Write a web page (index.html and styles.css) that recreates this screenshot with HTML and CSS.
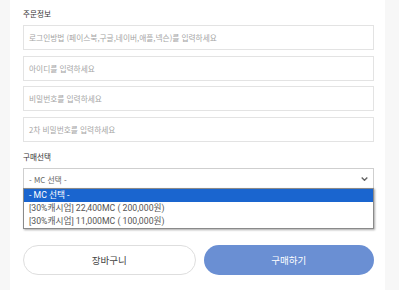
FILE: index.html
```html
<!DOCTYPE html>
<html lang="ko">
<head>
<meta charset="utf-8">
<link rel="stylesheet" href="styles.css">
</head>
<body>
<div class="panel">
  <div class="label label-top">주문정보</div>
  <div class="field">로그인방법 (페이스북,구글,네이버,애플,넥슨)를 입력하세요</div>
  <div class="field">아이디를 입력하세요</div>
  <div class="field">비밀번호를 입력하세요</div>
  <div class="field">2차 비밀번호를 입력하세요</div>
  <div class="label label-buy">구매선택</div>
  <div class="select-wrap">
    <div class="select">
      <span>- MC 선택 -</span>
      <svg class="chev" width="7" height="4" viewBox="0 0 7 4"><path d="M0.7 0.6 L3.5 3.3 L6.3 0.6" fill="none" stroke="#666" stroke-width="1.4"/></svg>
    </div>
    <div class="dropdown">
      <div class="opt opt-sel">- MC 선택 -</div>
      <div class="opt">[30%캐시업] 22,400MC ( 200,000원)</div>
      <div class="opt">[30%캐시업] 11,000MC ( 100,000원)</div>
    </div>
  </div>
  <div class="buttons">
    <div class="btn btn-cart">장바구니</div>
    <div class="btn btn-buy">구매하기</div>
  </div>
</div>
</body>
</html>
```
FILE: styles.css
```css
html, body {
  margin: 0;
  padding: 0;
  background: #f7f7f7;
  height: 290px;
  overflow: hidden;
}
body {
  font-family: "Noto Sans CJK KR", "Noto Sans", sans-serif;
}
.panel {
  margin-left: 10px;
  width: 375px;
  height: 290px;
  background: #fff;
  box-sizing: border-box;
  padding: 8px 11px 0 13px;
  display: flex;
  flex-direction: column;
}
.label {
  font-size: 7.6px;
  color: #333;
  line-height: 12px;
  height: 12px;
}
.label-top { margin-bottom: 5px; }
.label-buy { margin-top: 4px; margin-bottom: 5px; }
.field {
  height: 25px;
  box-sizing: border-box;
  border: 1px solid #e3e3e3;
  margin-bottom: 5.5px;
  padding-left: 5px;
  font-size: 7.7px;
  color: #a5a5a5;
  display: flex;
  align-items: center;
}
.select-wrap {
  position: relative;
}
.select {
  height: 21px;
  box-sizing: border-box;
  border: 1px solid #cfcfcf;
  border-bottom: none;
  padding-left: 5px;
  padding-right: 5px;
  font-size: 7.8px;
  color: #666;
  display: flex;
  align-items: center;
  justify-content: space-between;
}
.dropdown {
  position: absolute;
  left: 0;
  right: 0;
  top: 20px;
  background: #fff;
  border: 1px solid #8a8a8a;
  box-shadow: 1px 1px 2px rgba(0,0,0,0.35);
  z-index: 2;
}
.opt {
  height: 13px;
  line-height: 13px;
  font-family: "Roboto", "Noto Sans CJK KR", sans-serif;
  font-size: 8.7px;
  color: #555;
  padding-left: 5px;
}
.opt-sel {
  background: #1a65cf;
  color: #fff;
}
.buttons {
  margin-top: 56px;
  display: flex;
  gap: 8px;
}
.btn {
  flex: 1;
  height: 30px;
  box-sizing: border-box;
  border-radius: 15px;
  display: flex;
  align-items: center;
  justify-content: center;
  font-size: 9.5px;
}
.btn-cart {
  border: 1px solid #dedede;
  color: #444;
  background: #fff;
}
.btn-buy {
  background: #6a8fd3;
  color: #fff;
}
```
